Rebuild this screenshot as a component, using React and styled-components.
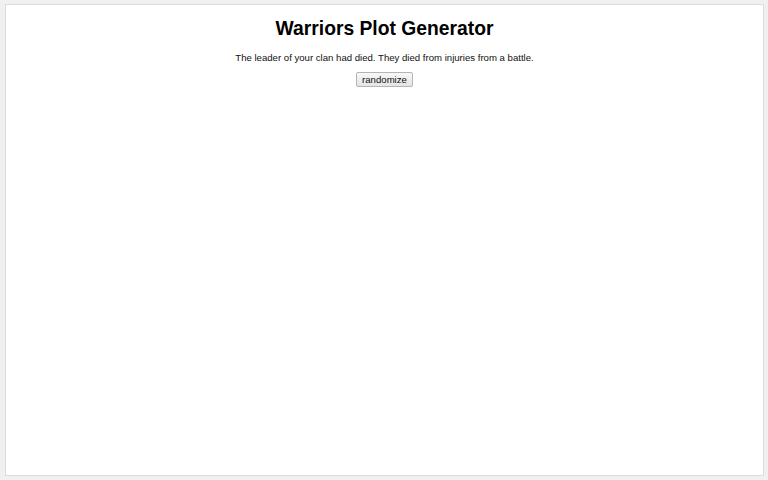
import React, { useState } from "react";
import styled, { createGlobalStyle } from "styled-components";

const GlobalStyle = createGlobalStyle`
  html, body {
    margin: 0;
    padding: 0;
    height: 100%;
    background: #f0f0f0;
    font-family: "Liberation Sans", Arial, sans-serif;
  }
  #root {
    height: 100%;
  }
`;

const Page = styled.div`
  box-sizing: border-box;
  height: 100vh;
  padding: 4px 4px 4px 5px;
  display: flex;
`;

const Panel = styled.main`
  flex: 1;
  background: #fff;
  border: 1px solid #dcdcdc;
  display: flex;
  flex-direction: column;
  align-items: center;
  padding-top: 13px;
`;

const Title = styled.h1`
  margin: 0;
  font-size: 19.3px;
  line-height: 22px;
  font-weight: bold;
  color: #000;
`;

const Plot = styled.p`
  margin: 12px 0 0;
  font-size: 9.6px;
  line-height: 12px;
  color: #111;
`;

const Button = styled.button`
  margin-top: 8px;
  font-family: "Liberation Sans", Arial, sans-serif;
  font-size: 9.6px;
  line-height: 11px;
  color: #111;
  padding: 1px 5px;
  height: 15px;
  background: linear-gradient(#f8f8f8, #e4e4e4);
  border: 1px solid #b4b4b4;
  border-radius: 2px;
`;

const plots = [
  "The leader of your clan had died. They died from injuries from a battle.",
];

export default function App() {
  const [plot, setPlot] = useState(plots[0]);
  return (
    <>
      <GlobalStyle />
      <Page>
        <Panel>
          <Title>Warriors Plot Generator</Title>
          <Plot>{plot}</Plot>
          <Button onClick={() => setPlot(plots[Math.floor(Math.random() * plots.length)])}>
            randomize
          </Button>
        </Panel>
      </Page>
    </>
  );
}
